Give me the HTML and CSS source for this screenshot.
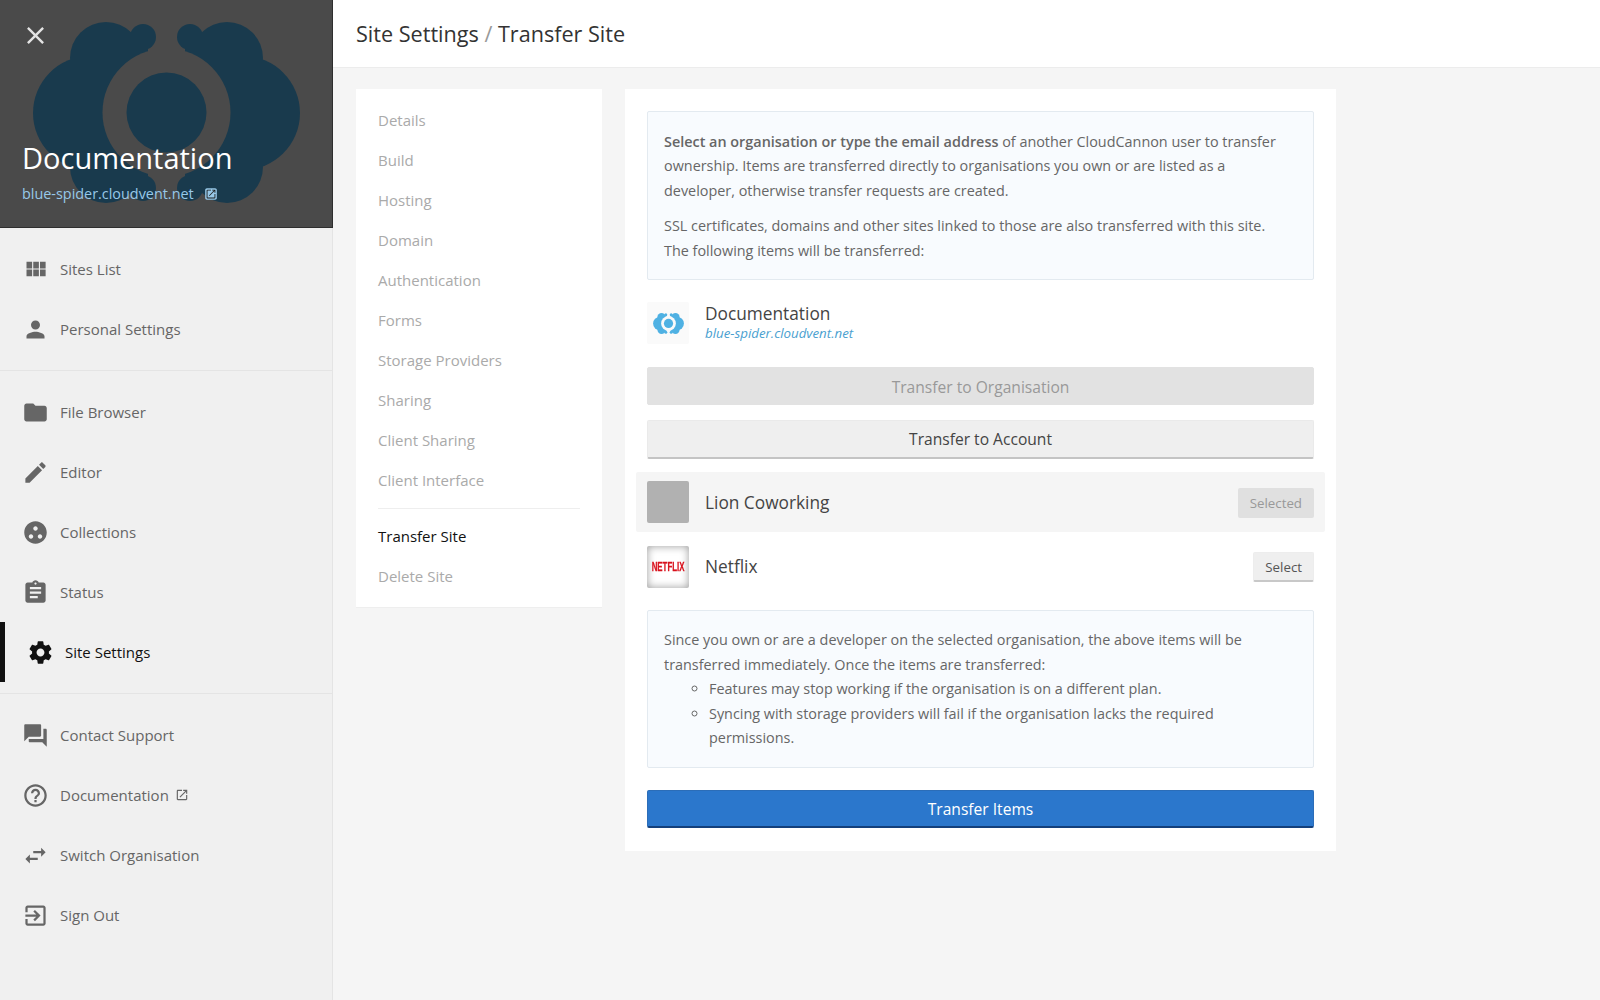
FILE: index.html
```html
<!DOCTYPE html>
<html lang="en">
<head>
	<meta charset="UTF-8">
	<title>Transfer Site</title>
	<link rel="stylesheet" href="styles.css">
</head>
<body>
	<svg class="defs" width="0" height="0">
		<defs>
			<mask id="cloud-mask" maskUnits="userSpaceOnUse" x="0" y="0" width="333" height="227">
				<g fill="#fff">
					<circle cx="90" cy="113" r="57"/>
					<circle cx="106" cy="58" r="36"/>
					<circle cx="106" cy="167" r="36"/>
					<circle cx="143" cy="37" r="13"/>
					<circle cx="143" cy="188" r="13"/>
					<rect x="90" y="45" width="58" height="135"/>
					<circle cx="243" cy="113" r="57"/>
					<circle cx="227" cy="58" r="36"/>
					<circle cx="227" cy="167" r="36"/>
					<circle cx="190" cy="37" r="13"/>
					<circle cx="190" cy="188" r="13"/>
					<rect x="185" y="45" width="58" height="135"/>
				</g>
				<circle cx="166.5" cy="112.5" r="64" fill="#000"/>
				<circle cx="166.5" cy="112.5" r="40" fill="#fff"/>
			</mask>
			<symbol id="i-cloud" viewBox="33 22 267 182">
				<rect x="0" y="0" width="333" height="227" fill="currentColor" mask="url(#cloud-mask)"/>
			</symbol>
			<symbol id="i-close" viewBox="0 0 24 24"><path d="M19 6.41L17.59 5 12 10.59 6.41 5 5 6.41 10.59 12 5 17.59 6.41 19 12 13.41 17.59 19 19 17.59 13.41 12 19 6.41z"/></symbol>
			<symbol id="i-grid" viewBox="0 0 24 24"><path d="M4 11h5V5H4v6zm0 7h5v-6H4v6zm6 0h5v-6h-5v6zm6 0h5v-6h-5v6zm-6-7h5V5h-5v6zm6-6v6h5V5h-5z"/></symbol>
			<symbol id="i-person" viewBox="0 0 24 24"><path d="M12 12c2.21 0 4-1.79 4-4s-1.79-4-4-4-4 1.79-4 4 1.79 4 4 4zm0 2c-2.67 0-8 1.34-8 4v2h16v-2c0-2.66-5.33-4-8-4z"/></symbol>
			<symbol id="i-folder" viewBox="0 0 24 24"><path d="M10 4H4c-1.1 0-1.99.9-1.99 2L2 18c0 1.1.9 2 2 2h16c1.1 0 2-.9 2-2V8c0-1.1-.9-2-2-2h-8l-2-2z"/></symbol>
			<symbol id="i-edit" viewBox="0 0 24 24"><path d="M3 17.25V21h3.75L17.81 9.94l-3.75-3.75L3 17.25zM20.71 7.04c.39-.39.39-1.02 0-1.41l-2.34-2.34c-.39-.39-1.02-.39-1.41 0l-1.83 1.83 3.75 3.75 1.83-1.83z"/></symbol>
			<symbol id="i-dots" viewBox="0 0 24 24"><path d="M12 2C6.48 2 2 6.48 2 12s4.48 10 10 10 10-4.48 10-10S17.52 2 12 2zM8 17.500c-1.100 0-2-.9-2-2s.9-2 2-2 2 .9 2 2-.9 2-2 2zm4-7c-1.100 0-2-.9-2-2s.9-2 2-2 2 .9 2 2-.9 2-2 2zm4 7c-1.100 0-2-.9-2-2s.9-2 2-2 2 .9 2 2-.9 2-2 2z"/></symbol>
			<symbol id="i-status" viewBox="0 0 24 24"><path d="M19 3h-4.18C14.4 1.84 13.3 1 12 1c-1.3 0-2.4.84-2.82 2H5c-1.1 0-2 .9-2 2v14c0 1.1.9 2 2 2h14c1.1 0 2-.9 2-2V5c0-1.1-.9-2-2-2zm-7 0c.55 0 1 .45 1 1s-.45 1-1 1-1-.45-1-1 .45-1 1-1zm2 14H7v-2h7v2zm3-4H7v-2h10v2zm0-4H7V7h10v2z"/></symbol>
			<symbol id="i-settings" viewBox="0 0 24 24"><path d="M19.43 12.98c.04-.32.07-.64.07-.98s-.03-.66-.07-.98l2.11-1.65c.19-.15.24-.42.12-.64l-2-3.46c-.12-.22-.39-.3-.61-.22l-2.49 1c-.52-.4-1.08-.73-1.69-.98l-.38-2.65C14.46 2.18 14.25 2 14 2h-4c-.25 0-.46.18-.49.42l-.38 2.65c-.61.25-1.17.59-1.69.98l-2.49-1c-.23-.09-.49 0-.61.22l-2 3.46c-.13.22-.07.49.12.64l2.11 1.65c-.04.32-.07.65-.07.98s.03.66.07.98l-2.11 1.65c-.19.15-.24.42-.12.64l2 3.46c.12.22.39.3.61.22l2.49-1c.52.4 1.08.73 1.69.98l.38 2.65c.03.24.24.42.49.42h4c.25 0 .46-.18.49-.42l.38-2.65c.61-.25 1.17-.59 1.69-.98l2.49 1c.23.09.49 0 .61-.22l2-3.46c.12-.22.07-.49-.12-.64l-2.11-1.65zM12 15.5c-1.93 0-3.5-1.57-3.5-3.5s1.57-3.5 3.5-3.5 3.5 1.57 3.5 3.5-1.57 3.5-3.5 3.5z"/></symbol>
			<symbol id="i-forum" viewBox="0 0 24 24"><path d="M21 6h-2v9H6v2c0 .55.45 1 1 1h11l4 4V7c0-.55-.45-1-1-1zm-4 6V3c0-.55-.45-1-1-1H3c-.55 0-1 .45-1 1v14l4-4h10c.55 0 1-.45 1-1z"/></symbol>
			<symbol id="i-help" viewBox="0 0 24 24"><path d="M11 18h2v-2h-2v2zm1-16C6.48 2 2 6.48 2 12s4.48 10 10 10 10-4.48 10-10S17.52 2 12 2zm0 18c-4.41 0-8-3.59-8-8s3.59-8 8-8 8 3.59 8 8-3.59 8-8 8zm0-14c-2.21 0-4 1.79-4 4h2c0-1.1.9-2 2-2s2 .9 2 2c0 2-3 1.75-3 5h2c0-2.25 3-2.5 3-5 0-2.21-1.79-4-4-4z"/></symbol>
			<symbol id="i-swap" viewBox="0 0 24 24"><path d="M6.99 11L3 15l3.99 4v-3H14v-2H6.99v-3zM21 9l-3.99-4v3H10v2h7.01v3L21 9z"/></symbol>
			<symbol id="i-exit" viewBox="0 0 24 24"><path d="M10.09 15.59L11.5 17l5-5-5-5-1.41 1.41L12.67 11H3v2h9.67l-2.58 2.59zM19 3H5c-1.11 0-2 .9-2 2v4h2V5h14v14H5v-4H3v4c0 1.1.89 2 2 2h14c1.1 0 2-.9 2-2V5c0-1.1-.9-2-2-2z"/></symbol>
			<symbol id="i-open" viewBox="0 0 24 24"><path d="M19 19H5V5h7V3H5c-1.11 0-2 .9-2 2v14c0 1.1.89 2 2 2h14c1.1 0 2-.9 2-2v-7h-2v7zM14 3v2h3.59l-9.83 9.83 1.41 1.41L19 6.41V10h2V3h-7z"/></symbol>
			<symbol id="i-open-fill" viewBox="0 0 24 24"><path d="M5 2h14c1.700 0 3 1.300 3 3v14c0 1.700-1.300 3-3 3H5c-1.700 0-3-1.300-3-3V5c0-1.700 1.300-3 3-3z"/><path fill="#1d1d1d" d="M18 18H6V6h6V4.500H6A1.500 1.500 0 0 0 4.500 6v12A1.500 1.500 0 0 0 6 19.500h12a1.500 1.500 0 0 0 1.500-1.500v-6H18v6zM14 4.500V6h3l-8.500 8.500 1 1L18 7v3h1.500V4.500H14z"/></symbol>
		</defs>
	</svg>

	<div class="app">
		<aside class="sidebar">
			<header class="site-head">
				<svg class="site-head-logo"><use href="#i-cloud"/></svg>
				<svg class="site-head-close"><use href="#i-close"/></svg>
				<h1 class="site-head-title">Documentation</h1>
				<div class="site-head-url">blue-spider.cloudvent.net <svg class="site-head-open"><use href="#i-open-fill"/></svg></div>
			</header>

			<nav class="nav-group">
				<a class="nav-item"><svg class="nav-icon"><use href="#i-grid"/></svg>Sites List</a>
				<a class="nav-item"><svg class="nav-icon"><use href="#i-person"/></svg>Personal Settings</a>
			</nav>
			<nav class="nav-group">
				<a class="nav-item"><svg class="nav-icon"><use href="#i-folder"/></svg>File Browser</a>
				<a class="nav-item"><svg class="nav-icon"><use href="#i-edit"/></svg>Editor</a>
				<a class="nav-item"><svg class="nav-icon"><use href="#i-dots"/></svg>Collections</a>
				<a class="nav-item"><svg class="nav-icon"><use href="#i-status"/></svg>Status</a>
				<a class="nav-item current"><svg class="nav-icon"><use href="#i-settings"/></svg>Site Settings</a>
			</nav>
			<nav class="nav-group">
				<a class="nav-item"><svg class="nav-icon"><use href="#i-forum"/></svg>Contact Support</a>
				<a class="nav-item"><svg class="nav-icon"><use href="#i-help"/></svg>Documentation <svg class="nav-open"><use href="#i-open"/></svg></a>
				<a class="nav-item"><svg class="nav-icon"><use href="#i-swap"/></svg>Switch Organisation</a>
				<a class="nav-item"><svg class="nav-icon"><use href="#i-exit"/></svg>Sign Out</a>
			</nav>
		</aside>

		<div class="page">
			<div class="topbar">Site Settings <span class="topbar-sep">/</span> Transfer Site</div>

			<div class="content">
				<ul class="side-menu">
					<li>Details</li>
					<li>Build</li>
					<li>Hosting</li>
					<li>Domain</li>
					<li>Authentication</li>
					<li>Forms</li>
					<li>Storage Providers</li>
					<li>Sharing</li>
					<li>Client Sharing</li>
					<li>Client Interface</li>
					<li class="divider"></li>
					<li class="current">Transfer Site</li>
					<li>Delete Site</li>
				</ul>

				<section class="card">
					<div class="notice">
						<p><strong>Select an organisation or type the email address</strong> of another CloudCannon user to transfer ownership. Items are transferred directly to organisations you own or are listed as a developer, otherwise transfer requests are created.</p>
						<p>SSL certificates, domains and other sites linked to those are also transferred with this site. The following items will be transferred:</p>
					</div>

					<div class="site-row">
						<div class="thumb thumb-site"><svg class="thumb-logo"><use href="#i-cloud"/></svg></div>
						<div>
							<div class="site-name">Documentation</div>
							<div class="site-url">blue-spider.cloudvent.net</div>
						</div>
					</div>

					<button class="btn btn-off">Transfer to Organisation</button>
					<button class="btn btn-plain">Transfer to Account</button>

					<div class="org-row selected">
						<div class="thumb thumb-grey"></div>
						<div class="org-name">Lion Coworking</div>
						<button class="btn-small btn-small-off">Selected</button>
					</div>
					<div class="org-row">
						<div class="thumb thumb-netflix"><span>NETFLIX</span></div>
						<div class="org-name">Netflix</div>
						<button class="btn-small">Select</button>
					</div>

					<div class="notice notice-second">
						Since you own or are a developer on the selected organisation, the above items will be transferred immediately. Once the items are transferred:
						<ul>
							<li>Features may stop working if the organisation is on a different plan.</li>
							<li>Syncing with storage providers will fail if the organisation lacks the required permissions.</li>
						</ul>
					</div>

					<button class="btn btn-primary">Transfer Items</button>
				</section>
			</div>
		</div>
	</div>
</body>
</html>
```

FILE: styles.css
```css
*{
	padding: 0;
	margin: 0;
	box-sizing: border-box;
}
body{
	font-family: "Open Sans", "Liberation Sans", sans-serif;
	font-size: 15px;
	color: #666;
	background-color: #f5f5f5;
}
.defs{
	display: block;
	height: 0;
}
.app{
	display: flex;
	height: 1000px;
	overflow: hidden;
}

/* sidebar */
.sidebar{
	width: 333px;
	flex: none;
	background-color: #f0f0f0;
	border-right: 1px solid #e4e4e4;
}
.site-head{
	height: 228px;
	margin-right: -1px;
	padding: 0 22px;
	position: relative;
	display: flex;
	flex-direction: column;
	justify-content: flex-end;
	background-color: #4a4a4a;
	border-right: 1px solid #2e2e2e;
	border-bottom: 1px solid #2e2e2e;
	overflow: hidden;
}
.site-head-logo{
	position: absolute;
	left: 33px;
	top: 22px;
	width: 267px;
	height: 182px;
	color: #193a4d;
}
.site-head-close{
	position: absolute;
	left: 21px;
	top: 21px;
	width: 29px;
	height: 29px;
	fill: #e4e4e4;
}
.site-head-title{
	position: relative;
	font-size: 29px;
	font-weight: 400;
	line-height: 38px;
	color: #fff;
}
.site-head-url{
	position: relative;
	display: flex;
	align-items: center;
	margin-top: 7px;
	margin-bottom: 23px;
	font-size: 14.400px;
	line-height: 20px;
	color: #97c8e8;
}
.site-head-open{
	width: 14px;
	height: 14px;
	margin-left: 10px;
	fill: #97c8e8;
}
.nav-group{
	padding: 11px 0;
	border-bottom: 1px solid #e4e4e4;
}
.nav-group:last-child{
	border-bottom: 0;
}
.nav-item{
	display: flex;
	align-items: center;
	height: 60px;
	padding-left: 22px;
	color: #666;
}
.nav-icon{
	width: 27px;
	height: 27px;
	margin-right: 11px;
	fill: #666;
}
.nav-open{
	width: 14px;
	height: 14px;
	margin-left: 6px;
	fill: #666;
}
.nav-item.current{
	border-left: 5px solid #111;
	color: #111;
}
.nav-item.current .nav-icon{
	fill: #111;
}

/* page */
.page{
	flex: 1;
	min-width: 0;
}
.topbar{
	height: 68px;
	padding-left: 23px;
	background-color: #fff;
	border-bottom: 1px solid #ececec;
	font-size: 21.600px;
	line-height: 67px;
	color: #333;
}
.topbar-sep{
	color: #999;
}
.content{
	display: flex;
	align-items: flex-start;
	gap: 23px;
	padding: 21px 23px;
}
.side-menu{
	width: 246px;
	flex: none;
	padding: 11px 22px;
	background-color: #fff;
	list-style: none;
	border-bottom: 1px solid #eee;
}
.side-menu li{
	height: 40px;
	line-height: 40px;
	color: #aaa;
}
.side-menu .divider{
	height: 1px;
	margin: 8px 0 7px;
	background-color: #eee;
}
.side-menu .current{
	color: #111;
}
.card{
	width: 711px;
	padding: 22px 22px 23px;
	background-color: #fff;
}
.notice{
	padding: 18px 20px 5px 16px;
	background-color: #f8fbfe;
	border: 1px solid #e3eaf0;
	border-radius: 2px;
	font-size: 14.400px;
	line-height: 1.7;
}
.notice p{
	margin-bottom: 11px;
}
.notice strong{
	font-weight: 600;
}
.notice-second{
	margin-top: 9px;
	padding: 17px 17px 16px 16px;
}
.notice-second ul{
	padding-left: 45px;
	list-style: circle;
}
.site-row{
	display: flex;
	align-items: center;
	gap: 16px;
	margin-top: 22px;
	height: 42px;
}
.thumb{
	width: 42px;
	height: 42px;
	flex: none;
	border-radius: 2px;
}
.thumb-site{
	display: flex;
	align-items: center;
	justify-content: center;
	background-color: #fafafa;
}
.thumb-logo{
	width: 31px;
	height: 21px;
	color: #4fb1e3;
}
.site-name{
	margin-top: -2px;
	font-size: 17.300px;
	line-height: 23px;
	color: #444;
}
.site-url{
	font-size: 13.300px;
	line-height: 17px;
	font-style: italic;
	color: #4a9fd0;
}
.btn{
	display: block;
	width: 100%;
	height: 39px;
	margin-top: 15px;
	border: 1px solid #eaeaea;
	border-radius: 2px;
	font-family: inherit;
	font-size: 15.600px;
	cursor: pointer;
}
.btn-off{
	height: 38px;
	margin-top: 23px;
	padding-top: 1px;
	background-color: #e2e2e2;
	border-color: #e2e2e2;
	color: #999;
}
.btn-plain{
	background-color: #efefef;
	border-bottom: 2px solid #c4c4c4;
	color: #444;
}
.btn-primary{
	height: 38px;
	margin-top: 22px;
	padding-top: 1px;
	background-color: #2b77cc;
	border-color: #2b6db8;
	border-bottom: 2px solid #13407c;
	color: #fff;
}
.org-row{
	display: flex;
	align-items: center;
	height: 60px;
	gap: 16px;
	margin: 0 -11px;
	padding: 0 11px;
	border-radius: 2px;
}
.org-row.selected{
	margin-top: 13px;
	background-color: #f5f5f5;
}
.org-row:not(.selected){
	height: 69px;
}
.org-name{
	flex: 1;
	font-size: 17.300px;
	color: #444;
}
.thumb-grey{
	background-color: #b1b1b1;
}
.thumb-netflix{
	display: flex;
	align-items: center;
	justify-content: center;
	background-color: #fff;
	box-shadow: inset 0 0 8px rgba(0, 0, 0, 0.4);
	color: #d8111c;
	font-family: "Liberation Sans", sans-serif;
	font-size: 12.500px;
	font-weight: 700;
	-webkit-text-stroke: 0.3px #d8111c;
}
.thumb-netflix span{
	display: block;
	transform: scaleX(0.63);
}
.btn-small{
	height: 30px;
	margin-top: 1px;
	padding: 0 11px;
	border: 1px solid #ededed;
	border-bottom: 2px solid #c8c8c8;
	border-radius: 2px;
	background-color: #efefef;
	font-family: inherit;
	font-size: 13.300px;
	color: #555;
	cursor: pointer;
}
.btn-small-off{
	padding: 0 12px;
	background-color: #e0e0e0;
	border: 0;
	color: #999;
}
```
